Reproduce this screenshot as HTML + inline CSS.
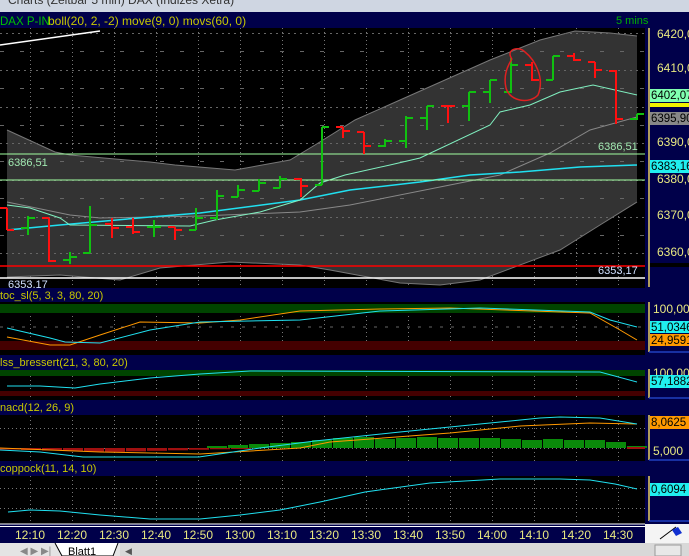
<!DOCTYPE html>
<html><head><meta charset="utf-8"><style>
html,body{margin:0;padding:0;background:#000;overflow:hidden}
body{width:689px;height:556px;position:relative;font-family:"Liberation Sans",sans-serif}
svg{position:absolute;left:0;top:0}
</style></head><body>
<svg width="689" height="556" viewBox="0 0 689 556" font-family="Liberation Sans, sans-serif">
<rect width="689" height="556" fill="#000"/>
<rect x="0" y="0" width="689" height="12" fill="#cfd6e2"/>
<text x="8" y="4" font-size="12" fill="#333">Charts (Zeitbar 5 min)  DAX (Indizes Xetra)</text>
<rect x="0" y="12" width="689" height="16" fill="#00004a"/>
<text x="0" y="25" font-size="11.5" fill="#00c000">DAX P-IN.</text>
<text x="48" y="25" font-size="12" fill="#c8c800">boll(20, 2, -2) move(9, 0) movs(60, 0)</text>
<text x="616" y="24" font-size="11" fill="#00b000">5 mins</text>
<rect x="645" y="28" width="44" height="260" fill="#00004a"/>
<line x1="649" y1="28" x2="649" y2="287" stroke="#e8d060" stroke-width="1.5"/>
<g id="grid" stroke="#777" stroke-dasharray="1,3" stroke-width="1"></g>
<polygon fill="#333" points="7,130 55,152 70,155 150,162 175,165 235,170 290,160 315,145 355,120 400,100 445,80 490,60 540,40 575,31 610,33 637,36 637,202 600,225 560,250 480,280 440,285 400,283 330,270 300,265 230,262 160,268 120,280 60,275 7,277"/>
<polyline fill="none" stroke="#777" points="7,130 55,152 70,155 150,162 175,165 235,170 290,160 315,145 355,120 400,100 445,80 490,60 540,40 575,31 610,33 637,36"/>
<polyline fill="none" stroke="#777" points="637,202 600,225 560,250 480,280 440,285 400,283 330,270 300,265 230,262 160,268 120,280 60,275 7,277"/>
<g id="hgrid" stroke="#666" stroke-dasharray="2,4"></g>
<polyline fill="none" stroke="#888" points="7,202 70,215 100,218 200,216 300,212 350,205 450,185 500,175 550,153 590,130 637,117"/>
<polyline fill="none" stroke="#20e0f0" stroke-width="1.5" points="7,230 60,225 150,217 200,213 300,200 350,190 420,182 470,175 520,172 580,167 637,165"/>
<polyline fill="none" stroke="#80f0c0" points="7,205 30,208 60,218 70,225 190,226 215,220 260,212 300,200 320,183 345,175 390,165 420,158 490,125 500,112 530,105 560,92 593,85 637,95"/>
<line x1="0" y1="154" x2="645" y2="154" stroke="#a0ffa0"/>
<line x1="0" y1="180" x2="645" y2="180" stroke="#a0ffa0"/>
<line x1="0" y1="266" x2="645" y2="266" stroke="#ff0000" stroke-width="1.5"/>
<line x1="0" y1="278" x2="645" y2="278" stroke="#fff" stroke-width="1.5"/>
<line x1="0" y1="45" x2="100" y2="31" stroke="#fff" stroke-width="1.5"/>
<text x="8" y="166" font-size="11" fill="#a0e8b0">6386,51</text>
<text x="598" y="150" font-size="11" fill="#a0e8b0">6386,51</text>
<text x="598" y="274" font-size="11" fill="#d0e0ff">6353,17</text>
<text x="8" y="288" font-size="11" fill="#d0e0ff">6353,17</text>
<g id="bars" stroke-width="2" fill="none"></g>
<path d="M512 59 C505 50,518 45,525 52 C535 60,545 78,538 95 C530 104,510 102,506 88 C503 75,508 65,512 59" fill="none" stroke="#e02020" stroke-width="1.5"/>
<g font-size="12" fill="#e8e880">
<text x="657" y="38">6420,0</text><text x="657" y="72">6410,0</text>
<text x="657" y="146">6390,0</text><text x="657" y="183">6380,0</text>
<text x="657" y="219">6370,0</text><text x="657" y="256">6360,0</text>
</g>
<rect x="650" y="89" width="39" height="13" fill="#80ffb0"/><text x="651" y="99" font-size="11.5" fill="#000">6402,07</text>
<rect x="650" y="103" width="39" height="4" fill="#f0f000"/>
<rect x="650" y="112" width="39" height="13" fill="#888"/><text x="651" y="122" font-size="11.5" fill="#000">6395,90</text>
<rect x="650" y="160" width="39" height="13" fill="#20f0f0"/><text x="651" y="170" font-size="11.5" fill="#000">6383,16</text>
<rect x="650" y="263" width="39" height="4" fill="#000"/>
<rect x="0" y="288" width="689" height="14" fill="#00004a"/>
<text x="0" y="299" font-size="11" fill="#c8c800">toc_sl(5, 3, 3, 80, 20)</text>
<rect x="0" y="352" width="689" height="3" fill="#000"/>
<rect x="0" y="355" width="689" height="15" fill="#00004a"/>
<text x="0" y="366" font-size="11" fill="#c8c800">lss_bressert(21, 3, 80, 20)</text>
<rect x="0" y="400" width="689" height="15" fill="#00004a"/>
<text x="0" y="411" font-size="11" fill="#c8c800">nacd(12, 26, 9)</text>
<rect x="0" y="461" width="689" height="15" fill="#00004a"/>
<text x="0" y="472" font-size="11" fill="#c8c800">coppock(11, 14, 10)</text>
<rect x="645" y="302" width="44" height="222" fill="#00004a"/>
<g stroke="#e8d060" stroke-width="1.5"><line x1="649" y1="302" x2="649" y2="352"/><line x1="649" y1="369" x2="649" y2="398"/><line x1="649" y1="415" x2="649" y2="460"/><line x1="649" y1="476" x2="649" y2="521"/></g>
<g stroke="#2040c0" stroke-width="1.5"><line x1="649" y1="352" x2="689" y2="352"/><line x1="649" y1="398" x2="689" y2="398"/><line x1="649" y1="460" x2="689" y2="460"/><line x1="649" y1="521" x2="689" y2="521"/></g>
<rect x="0" y="304" width="645" height="9" fill="#004400"/>
<rect x="0" y="341" width="645" height="9" fill="#440000"/>
<line x1="0" y1="327" x2="645" y2="327" stroke="#666" stroke-dasharray="3,8"/>
<polyline fill="none" stroke="#ff9900" points="7,337 50,345 70,345 100,335 140,322 200,323 240,320 300,311 380,309 450,308 590,313 620,330 637,340"/>
<polyline fill="none" stroke="#20e0f0" points="7,328 50,338 65,342 100,343 150,330 200,322 300,320 380,311 480,308 590,312 610,320 637,327"/>
<text x="653" y="313" font-size="12" fill="#e8e880">100,000</text>
<rect x="650" y="321" width="39" height="12" fill="#20f0f0"/><text x="651" y="331" font-size="11.5" fill="#000">51,0346</text>
<rect x="650" y="334" width="39" height="12" fill="#ff9900"/><text x="651" y="344" font-size="11.5" fill="#000">24,9591</text>
<rect x="0" y="370" width="645" height="6" fill="#004400"/>
<rect x="0" y="391" width="645" height="5" fill="#440000"/>
<polyline fill="none" stroke="#20e0f0" points="7,386 40,386 75,388 100,384 150,378 200,374 250,371 600,372 637,382"/>
<text x="653" y="377" font-size="12" fill="#e8e880">100,000</text>
<rect x="650" y="375" width="39" height="13" fill="#20f0f0"/><text x="651" y="385" font-size="11.5" fill="#000">57,1882</text>
<g id="hist"></g>
<polyline fill="none" stroke="#ff9900" points="0,448 100,452 200,454 300,448 330,442 450,433 520,426 590,423 637,424"/>
<polyline fill="none" stroke="#20e0f0" points="0,450 40,452 83,457 199,457 260,448 315,441 400,432 480,424 540,418 560,417 600,418 637,424"/>
<text x="653" y="455" font-size="12" fill="#e8e880">5,000</text>
<rect x="650" y="416" width="39" height="13" fill="#ff9900"/><text x="651" y="426" font-size="11.5" fill="#000">8,0625</text>
<polyline fill="none" stroke="#20e0f0" points="8,512 30,510 60,511 100,515 150,519 200,519 240,515 280,510 320,502 365,492 430,483 500,479 560,479 590,480 615,484 637,489"/>
<rect x="650" y="483" width="39" height="13" fill="#20f0f0"/><text x="651" y="493" font-size="11.5" fill="#000">0,6094</text>
<rect x="0" y="524" width="645" height="19" fill="#00004a"/>
<line x1="0" y1="524" x2="645" y2="524" stroke="#fff"/><line x1="0" y1="526.5" x2="645" y2="526.5" stroke="#fff"/>
<g id="times" font-size="12" fill="#e8e880" text-anchor="middle"></g>
<rect x="645" y="524" width="44" height="19" fill="#f4f4f4"/>
<path d="M660 539 L676 527" stroke="#000" stroke-width="1"/><path d="M672 530 l6 -3 l4 6 l-6 3z" fill="#1030d0"/>
<rect x="0" y="543" width="689" height="13" fill="#d8d8d8"/>
<rect x="0" y="543" width="120" height="13" fill="#e4e4e4"/>
<path d="M55 543 L62 556 L113 556 L118 543" fill="#fff" stroke="#000"/>
<text x="68" y="555" font-size="11" fill="#000">Blatt1</text>
<text x="20" y="554" font-size="10" fill="#888">◀ ▶ ▶|</text>
<text x="125" y="554" font-size="9" fill="#555">◀</text>
<rect x="655" y="545" width="26" height="11" fill="#e8e8e8" stroke="#999"/>
</svg>
<script>
var NS="http://www.w3.org/2000/svg";
function el(p,t,a){var e=document.createElementNS(NS,t);for(var k in a)e.setAttribute(k,a[k]);p.appendChild(e);return e;}
var g=document.getElementById("grid");
for(var x=30;x<645;x+=42) el(g,"line",{x1:x+.5,y1:28,x2:x+.5,y2:524});
var h=document.getElementById("hgrid");
[33,70,107,143,180,217,253].forEach(function(y){el(h,"line",{x1:0,y1:y+.5,x2:645,y2:y+.5});});
[51,88,125,161,198,235].forEach(function(y){el(h,"line",{x1:0,y1:y+.5,x2:645,y2:y+.5,"stroke-dasharray":"4,16"});});
[428,448,488,508].forEach(function(y){el(g,"line",{x1:0,y1:y+.5,x2:645,y2:y+.5});});
var B=[[7,'r',208,230,208,230],[28,'g',216,235,228,218],[49,'r',218,262,218,261],[70,'g',252,264,260,257],[90,'g',206,253,253,225],
[112,'r',218,238,224,228],[133,'r',218,234,227,232],[154,'g',220,237,227,227],[175,'r',227,240,227,230],[196,'g',208,230,230,218],
[217,'g',190,220,218,196],[238,'g',185,197,197,190],[259,'g',179,191,191,183],[280,'g',176,188,188,179],[301,'r',178,197,179,186],
[322,'g',127,185,185,127],[343,'r',127,138,127,131],[364,'r',132,154,132,146],[385,'g',139,147,146,141],[406,'g',116,148,141,118],
[427,'g',106,130,118,106],[448,'r',105,123,106,106],[469,'g',92,121,106,92],[490,'g',80,103,92,80],[511,'g',58,93,92,65],
[532,'r',62,81,65,80],[553,'g',56,80,80,56],[574,'r',53,61,56,60],[595,'r',62,78,62,70],[616,'r',70,124,71,119],[637,'g',114,120,119,114]];
var bg=document.getElementById("bars");
B.forEach(function(b){var c=b[1]=='g'?'#10c010':'#ff1010';
el(bg,"path",{d:"M"+b[0]+" "+b[2]+"V"+b[3]+"M"+(b[0]-7)+" "+b[4]+"H"+b[0]+"M"+b[0]+" "+b[5]+"H"+(b[0]+7),stroke:c});});
var hi=document.getElementById("hist");
for(var x=0;x<240;x+=21){el(hi,"rect",{x:x,y:448,width:20,height:Math.max(1,4-Math.abs(x-100)/40),fill:"#a01010"});}
var hv=[2,3,4,5,6,8,10,11,9,10,11,10,10,10,9,8,9,8,8,6,2];
for(var i=0;i<hv.length;i++){var x=207+i*21;el(hi,"rect",{x:x,y:448-hv[i],width:20,height:hv[i],fill:"#0a8a0a"});}
el(hi,"rect",{x:627,y:447,width:18,height:2,fill:"#a01010"});
var T=["12:10","12:20","12:30","12:40","12:50","13:00","13:10","13:20","13:30","13:40","13:50","14:00","14:10","14:20","14:30"];
var tg=document.getElementById("times");
T.forEach(function(t,i){var e=el(tg,"text",{x:30+42*i,y:539});e.textContent=t;});
</script>
</body></html>
